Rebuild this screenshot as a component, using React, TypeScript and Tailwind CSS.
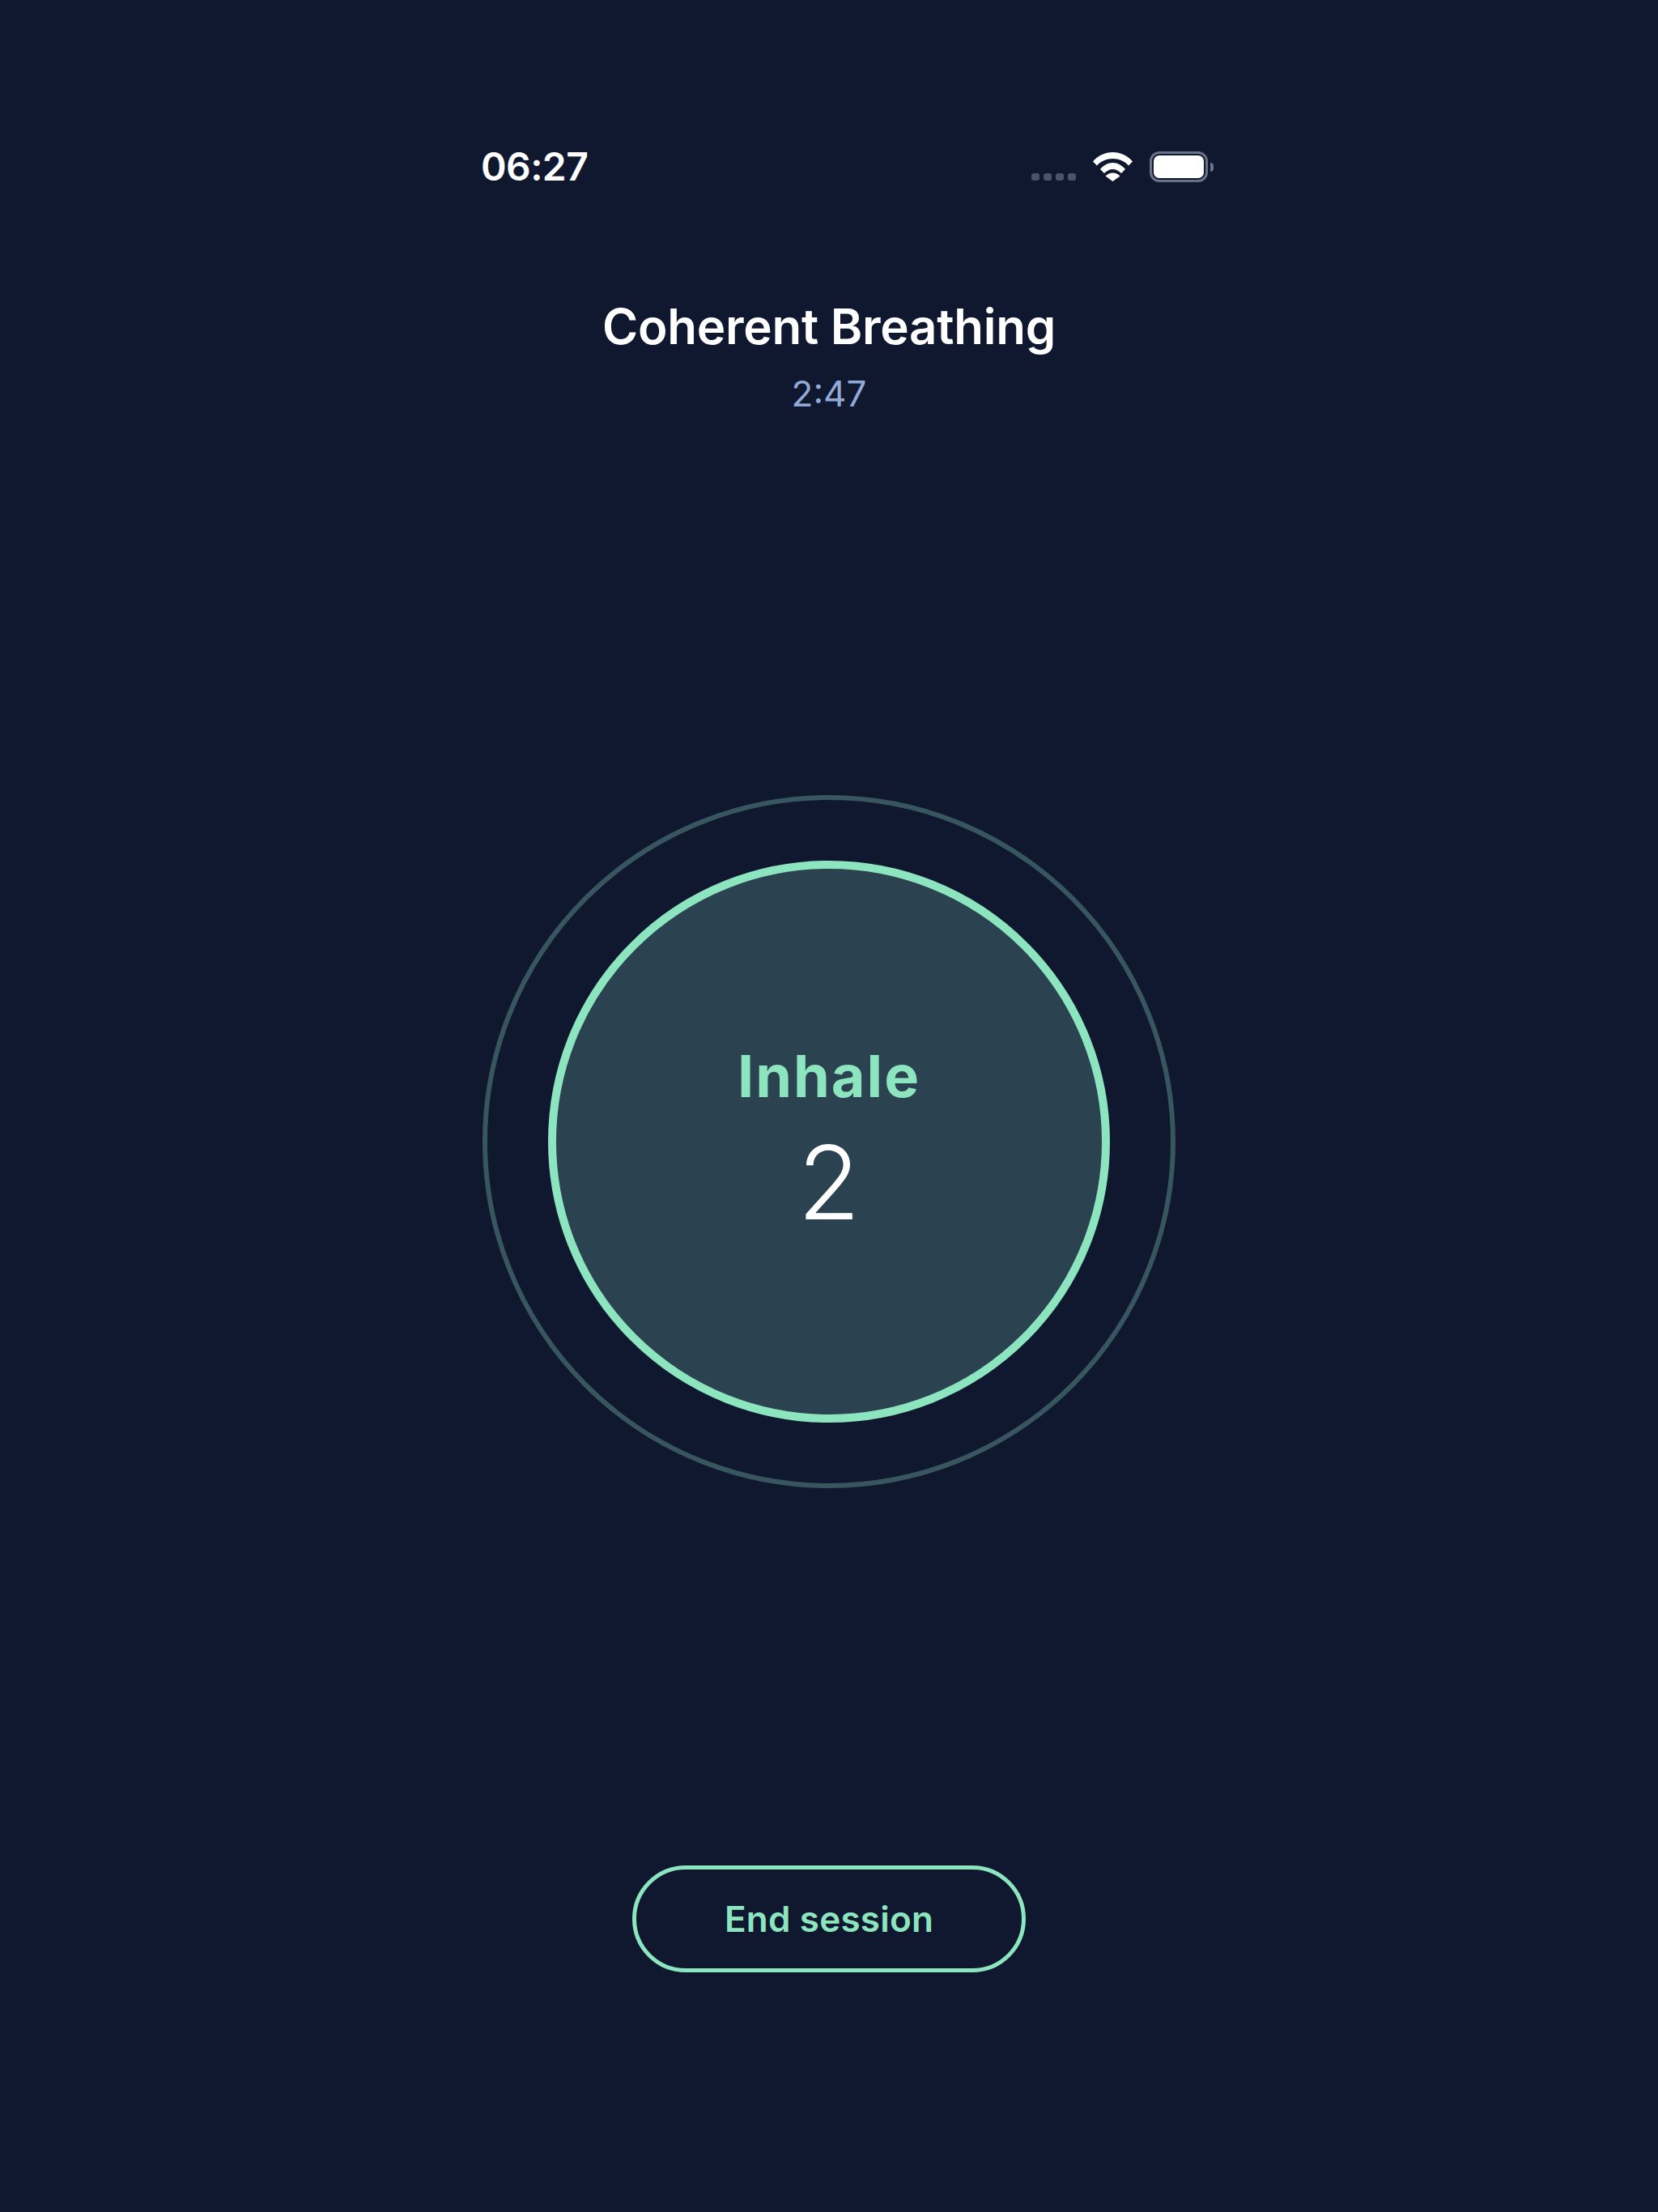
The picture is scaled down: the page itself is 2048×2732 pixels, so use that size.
const WifiIcon = () => (
  <svg width="49" height="36" viewBox="0 0 49 36" fill="#ffffff">
    <path d="M0 11.5C6.5 4 15 0 24.5 0S42.5 4 49 11.5L44 16.5C39 11 32.5 8 24.5 8S10 11 5 16.5Z" />
    <path d="M9 21C13 16.5 18.5 13 24.5 13S36 16.5 40 21L35 26C32 23 28.5 21 24.5 21S17 23 14 26Z" />
    <path d="M15.5 29.5C18 27 21 25.5 24.5 25.5S31 27 33.5 29.5L24.5 36Z" />
  </svg>
);

const App = () => {
  return (
    <div className="flex min-h-[2732px] w-full flex-col items-center bg-[#101830] font-['Inter',sans-serif] text-white">
      {/* Status bar */}
      <div className="flex h-[52px] w-full items-center justify-between pl-[594px] pr-[549px] mt-[180px]">
        <span className="text-[48px] leading-none font-semibold tracking-[-0.6px]">06:27</span>
        <div className="flex items-center">
          <div className="mt-[24px] flex gap-[5px]">
            <span className="h-[9px] w-[10px] rounded-[3px] bg-[#4a5368]" />
            <span className="h-[9px] w-[10px] rounded-[3px] bg-[#4a5368]" />
            <span className="h-[9px] w-[10px] rounded-[3px] bg-[#4a5368]" />
            <span className="h-[9px] w-[10px] rounded-[3px] bg-[#4a5368]" />
          </div>
          <div className="ml-[21px]">
            <WifiIcon />
          </div>
          <div className="ml-[21px] flex items-center">
            <div className="h-[38px] w-[72px] rounded-[12px] border-[3px] border-[#6b7285] p-[2px]">
              <div className="h-full w-full rounded-[7px] bg-white" />
            </div>
            <div className="ml-[3px] h-[11px] w-[4px] rounded-r-full bg-[#6b7285]" />
          </div>
        </div>
      </div>

      {/* Title */}
      <h1 className="mt-[135px] text-[60px] leading-[72px] font-semibold tracking-[-0.25px]">Coherent Breathing</h1>
      <p className="mt-[19px] text-[44px] leading-[56px] font-normal text-[#94aad6]">2:47</p>

      {/* Breathing circle */}
      <div className="mt-[468px] flex h-[856px] w-[856px] items-center justify-center rounded-full border-[6px] border-[#38565f]">
        <div className="flex h-[694px] w-[694px] flex-col items-center justify-center rounded-full border-[10px] border-[#8ce5bf] bg-[#2b4250]">
          <span className="text-[72px] leading-[88px] font-bold tracking-[2px] text-[#8ce5bf]">Inhale</span>
          <span className="mt-[12px] text-[126px] leading-[150px] font-light">2</span>
        </div>
      </div>

      {/* End button */}
      <button className="mt-[466px] flex h-[132px] w-[486px] items-center justify-center rounded-[66px] border-[5px] border-[#8ce5bf] text-[44px] font-semibold tracking-[0.2px] text-[#8ce5bf]">
        End session
      </button>
    </div>
  );
};

export default App;
